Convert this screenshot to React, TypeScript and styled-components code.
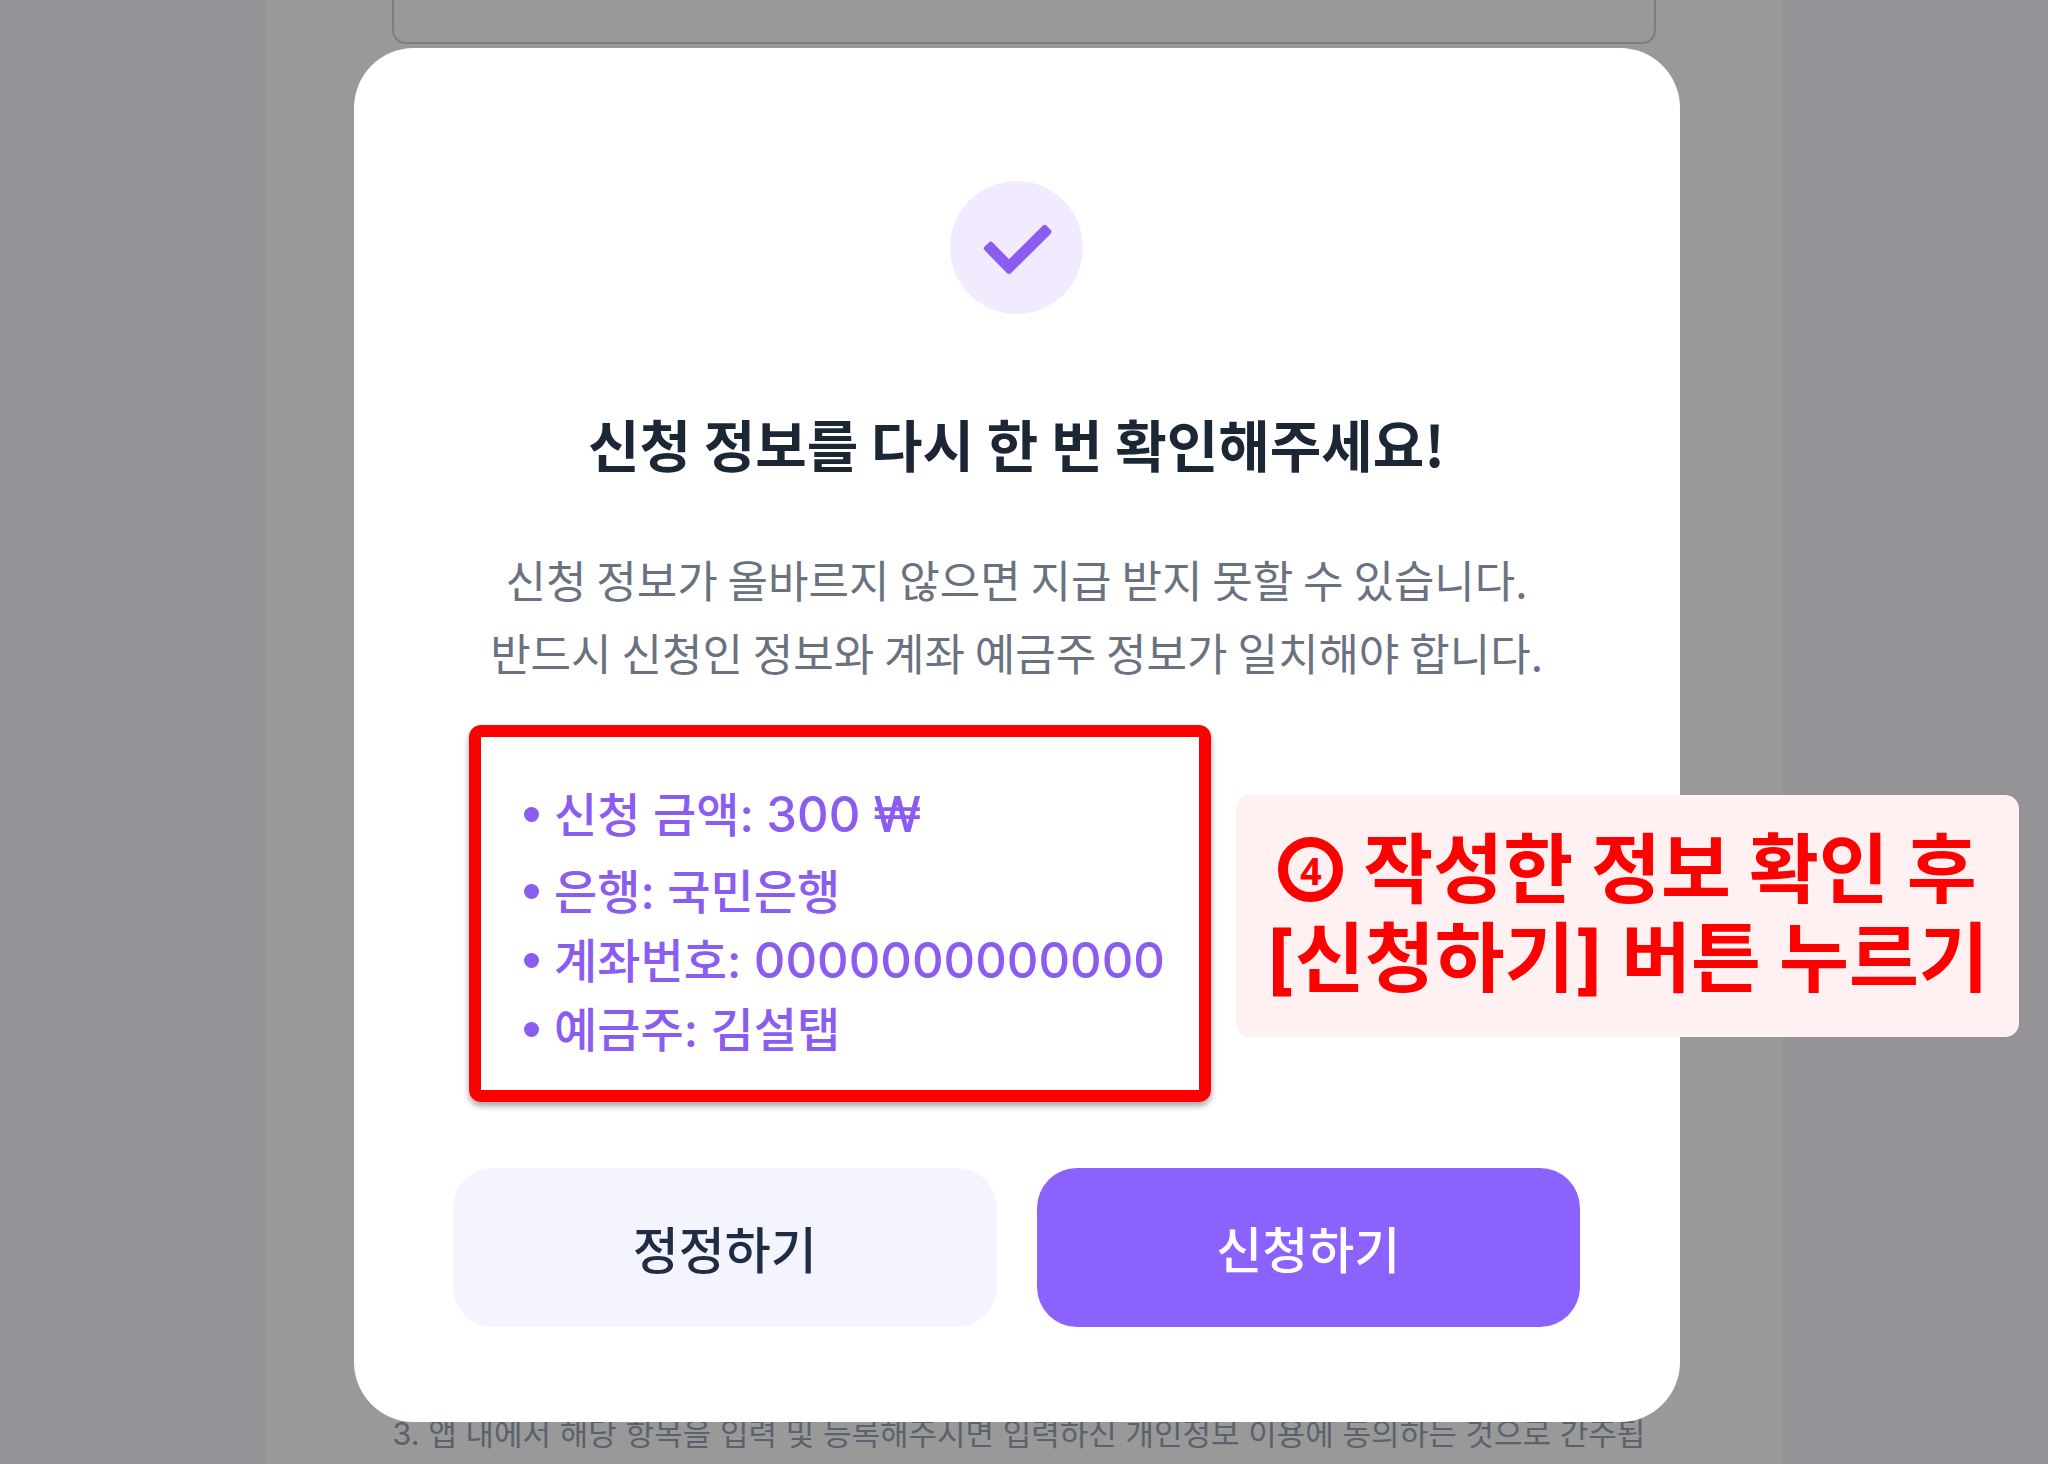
import React from "react";
import styled, { createGlobalStyle } from "styled-components";

const GlobalStyle = createGlobalStyle`
  *, *::before, *::after {
    box-sizing: border-box;
  }

  body {
    margin: 0;
    background: #f8f6fe;
    font-family: "Noto Sans CJK KR", "Noto Sans", sans-serif;
    overflow: hidden;
  }

  h2, p, ul {
    margin: 0;
    padding: 0;
  }
`;

const mixedFont = `"Inter", "Noto Sans CJK KR", sans-serif`;

const Page = styled.main`
  display: flex;
  justify-content: center;
  height: 100vh;
`;

const Column = styled.div`
  display: flex;
  flex-direction: column;
  justify-content: space-between;
  width: 74%;
  padding: 0 126px 4px;
  background: #ffffff;
`;

const Field = styled.textarea`
  width: 100%;
  height: 44px;
  padding: 0;
  border: 2px solid #d3d1dc;
  border-top: 0;
  border-radius: 0 0 14px 14px;
  background: transparent;
  resize: none;
`;

const Notice = styled.p`
  color: #98a4b8;
  font-family: ${mixedFont};
  font-size: 31px;
  line-height: 52px;
  white-space: nowrap;
`;

const Overlay = styled.div`
  position: fixed;
  inset: 0;
  display: flex;
  align-items: center;
  justify-content: center;
  padding: 6px 14px 0 0;
  background: rgba(0, 0, 0, 0.4);
`;

const Dialog = styled.section`
  position: relative;
  display: flex;
  flex-direction: column;
  width: 1326px;
  padding: 133px 100px 95px 99px;
  border-radius: 60px;
  background: #ffffff;
`;

const CheckBadge = styled.span`
  display: flex;
  align-self: center;
  width: 133px;
  height: 133px;
  border-radius: 50%;
  background: #f2ebff;
`;

const Title = styled.h2`
  margin-top: 89px;
  color: #1c2736;
  font-size: 56px;
  font-weight: 700;
  line-height: 80px;
  text-align: center;
`;

const Description = styled.p`
  margin-top: 60px;
  color: #6a7180;
  font-size: 44px;
  line-height: 73px;
  text-align: center;
  white-space: nowrap;
`;

const Summary = styled.ul`
  width: 742px;
  margin: 36px 0 0 16px;
  padding: 43px 0 26px 43px;
  border: 12px solid #ff0000;
  border-radius: 12px;
  box-shadow: 0 4px 6px rgba(0, 0, 0, 0.35);
  list-style: none;
`;

const SummaryItem = styled.li`
  display: flex;
  align-items: center;
  gap: 15px;
  color: #8b5cf0;
  font-family: ${mixedFont};
  font-size: 47px;
  font-weight: 500;
  line-height: 69px;
  white-space: nowrap;

  &::before {
    content: "";
    width: 15px;
    height: 15px;
    border-radius: 50%;
    background: currentColor;
  }

  &:first-child {
    margin-bottom: 8px;
  }
`;

const Figure = styled.span`
  font-size: 49px;
  line-height: 1;
`;

const Actions = styled.div`
  display: grid;
  grid-template-columns: 1fr 1fr;
  gap: 40px;
  margin-top: 66px;
`;

const ActionButton = styled.button<{ $primary?: boolean }>`
  height: 159px;
  padding: 0 0 2px;
  border: 0;
  border-radius: 40px;
  background: ${({ $primary }) => ($primary ? "#8c62ff" : "#f3f4fd")};
  color: ${({ $primary }) => ($primary ? "#ffffff" : "#1e2d44")};
  font-family: ${mixedFont};
  font-size: 50px;
  font-weight: 500;
  cursor: pointer;
`;

const Callout = styled.aside`
  position: absolute;
  top: 747px;
  left: 882px;
  width: 783px;
  padding: 30px 0 34px;
  border-radius: 14px;
  background: #fff1f2;
  color: #ff0000;
  font-family: ${mixedFont};
  font-size: 76px;
  font-weight: 700;
  line-height: 89px;
  white-space: nowrap;
`;

const CalloutLine = styled.div`
  display: flex;
  align-items: center;
  justify-content: center;
  gap: 20px;
`;

const StepNumber = styled.span`
  display: flex;
  align-items: center;
  justify-content: center;
  width: 65px;
  height: 65px;
  border: 10px solid currentColor;
  border-radius: 50%;
  font-family: "Noto Sans", sans-serif;
  font-size: 38px;
  line-height: 1;
`;

function CheckIcon() {
  return (
    <svg width="133" height="133" viewBox="0 0 133 133" aria-hidden="true">
      <path
        d="M37 67.500 40.800 63.800 59 82.400 94.800 47 98.400 50.800 59 89.900Z"
        fill="#8b5cf0"
        stroke="#8b5cf0"
        strokeWidth="6"
        strokeLinejoin="round"
      />
    </svg>
  );
}

export default function App() {
  return (
    <>
      <GlobalStyle />
      <Page>
        <Column>
          <Field aria-label="신청 내용" />
          <Notice>
            3. 앱 내에서 해당 항목을 입력 및 등록해주시면 입력하신 개인정보 이용에 동의하는 것으로 간주됩
          </Notice>
        </Column>
      </Page>
      <Overlay>
        <Dialog role="dialog" aria-modal="true" aria-labelledby="confirm-title">
          <CheckBadge>
            <CheckIcon />
          </CheckBadge>
          <Title id="confirm-title">신청 정보를 다시 한 번 확인해주세요!</Title>
          <Description>
            신청 정보가 올바르지 않으면 지급 받지 못할 수 있습니다.
            <br />
            반드시 신청인 정보와 계좌 예금주 정보가 일치해야 합니다.
          </Description>
          <Summary>
            <SummaryItem>
              <span>
                신청 금액: <Figure>300 ₩</Figure>
              </span>
            </SummaryItem>
            <SummaryItem>은행: 국민은행</SummaryItem>
            <SummaryItem>
              <span>
                계좌번호: <Figure>0000000000000</Figure>
              </span>
            </SummaryItem>
            <SummaryItem>예금주: 김설탭</SummaryItem>
          </Summary>
          <Actions>
            <ActionButton type="button">정정하기</ActionButton>
            <ActionButton type="button" $primary>
              신청하기
            </ActionButton>
          </Actions>
          <Callout>
            <CalloutLine>
              <StepNumber>4</StepNumber>
              <span>작성한 정보 확인 후</span>
            </CalloutLine>
            <CalloutLine>[신청하기] 버튼 누르기</CalloutLine>
          </Callout>
        </Dialog>
      </Overlay>
    </>
  );
}
